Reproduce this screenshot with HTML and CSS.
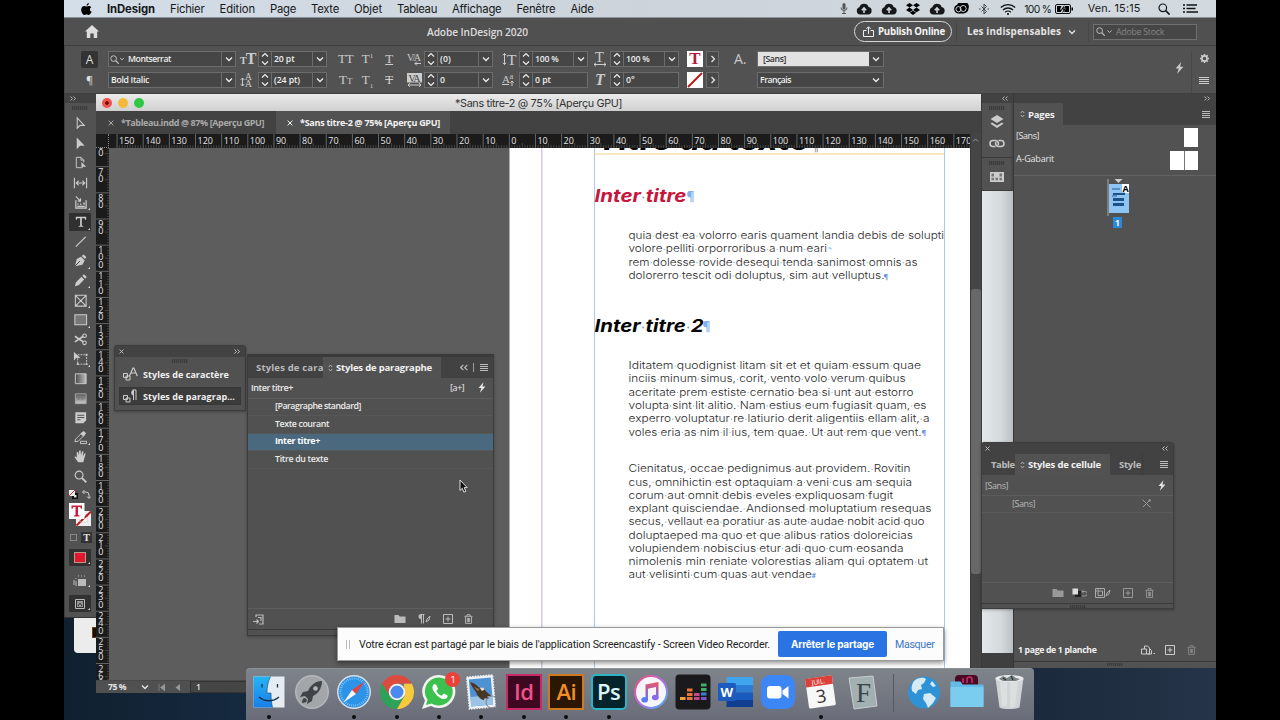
FILE: index.html
```html
<!DOCTYPE html>
<html lang="fr">
<head>
    <meta charset="UTF-8">
    <meta name="viewport" content="width=device-width, initial-scale=1.0">
    <title>Adobe InDesign 2020</title>
    <link rel="stylesheet" href="styles.css">
</head>
<body>
    <svg class="defs" width="0" height="0">
        <symbol id="down" viewBox="0 0 10 10"><path d="M2 3.5l3 3 3-3" fill="none" stroke="currentColor" stroke-width="1.3"/></symbol>
        <symbol id="right" viewBox="0 0 10 10"><path d="M3.5 2l3 3-3 3" fill="none" stroke="currentColor" stroke-width="1.3"/></symbol>
        <symbol id="spin" viewBox="0 0 12 16"><path d="M3 5.5l3-3 3 3M3 10.5l3 3 3-3" fill="none" stroke="currentColor" stroke-width="1.2"/></symbol>
        <symbol id="menu" viewBox="0 0 8 7" preserveAspectRatio="none"><path d="M0 .5h8M0 2.5h8M0 4.5h8M0 6.5h8" stroke="currentColor" stroke-width="1"/></symbol>
        <symbol id="dbl-right" viewBox="0 0 6 5"><path d="M.5.5l2 2-2 2M3.5.5l2 2-2 2" fill="none" stroke="currentColor" stroke-width=".9"/></symbol>
        <symbol id="dbl-left" viewBox="0 0 6 5"><path d="M2.5.5l-2 2 2 2M5.5.5l-2 2 2 2" fill="none" stroke="currentColor" stroke-width=".9"/></symbol>
        <symbol id="close" viewBox="0 0 6 6"><path d="M.6.6l4.8 4.8M5.4.6L.6 5.4" stroke="currentColor" stroke-width="1"/></symbol>
        <symbol id="updown" viewBox="0 0 5 8"><path d="M.8 3l1.7-2 1.7 2M.8 5l1.7 2 1.7-2" fill="none" stroke="currentColor" stroke-width=".9"/></symbol>
        <symbol id="bolt" viewBox="0 0 9 12"><path d="M6.2 0L.6 6.6h3.2L2 12l6.4-7.2H5z" fill="currentColor"/></symbol>
        <symbol id="search" viewBox="0 0 12 12"><circle cx="4.8" cy="4.8" r="3.8" fill="none" stroke="currentColor" stroke-width="1.2"/><path d="M7.6 7.6l4 4" stroke="currentColor" stroke-width="1.6"/></symbol>
        <symbol id="cloud" viewBox="0 0 16 12"><path d="M4 11.5a3.7 3.7 0 0 1-.6-7.2A4.8 4.8 0 0 1 12.6 4a3.8 3.8 0 0 1-.4 7.5z" fill="currentColor"/><path d="M8 10V5.4M5.8 7.2L8 5l2.2 2.2" fill="none" stroke="#ccd4da" stroke-width="1.6"/></symbol>
        <symbol id="folder" viewBox="0 0 12 10"><path d="M.5 1h4l1.2 1.5h5.8V9H.5z" fill="currentColor"/></symbol>
        <symbol id="plus" viewBox="0 0 10 10"><path d="M.5.5h9v9h-9zM5 2.6v4.8M2.6 5h4.8" fill="none" stroke="currentColor"/></symbol>
        <symbol id="trash" viewBox="0 0 10 11"><path d="M.5 2.5h9M3.3 2.2V.7h3.4v1.5M1.6 2.8v7.6h6.8V2.8M3.7 4.2v4.8M5 4.2v4.8M6.3 4.2v4.8" fill="none" stroke="currentColor" stroke-width="1"/></symbol>
    </svg>

    <div class="screen">
        <div class="back-window"><i></i></div>

        <div class="menubar">
            <svg class="apple" width="11" height="12" viewBox="0 0 11 12"><path d="M7.9 0C6.5.2 5.5 1.3 5.6 2.7 6.9 2.7 7.9 1.4 7.9 0zM5.600 3.500C5 3.500 4.300 3 3.300 3 1.600 3 .2 4.400.2 6.800.2 9.200 1.900 12 3.400 12c.8 0 1.200-.5 2.200-.5s1.300.5 2.100.5c1.300 0 2.500-2 2.900-3.200C8.400 7.700 8.400 5 10.300 4.200 9.700 3.400 8.800 3 8 3 6.900 3 6.300 3.500 5.600 3.500z"/></svg>
            <b data-w="48">InDesign</b>
            <span data-w="34.5">Fichier</span>
            <span data-w="35.5">Edition</span>
            <span data-w="26">Page</span>
            <span data-w="28">Texte</span>
            <span data-w="28">Objet</span>
            <span data-w="40">Tableau</span>
            <span data-w="49.5">Affichage</span>
            <span data-w="39">Fenêtre</span>
            <span data-w="23">Aide</span>
            <div class="tray">
                <svg width="8" height="11" viewBox="0 0 8 11"><rect x="2.5" width="3" height="6.5" rx="1.5" fill="#555"/><path d="M1 4.5a3 3 0 0 0 6 0M4 7.5v3M2 10.5h4" fill="none" stroke="#555"/></svg>
                <svg width="16" height="12"><use href="#cloud"/></svg>
                <svg width="16" height="12"><use href="#cloud"/></svg>
                <svg width="14" height="12" viewBox="0 0 14 12"><path d="M3.5 0L7 2.3 3.5 4.6 0 2.3zM10.5 0L14 2.3l-3.5 2.3L7 2.3zM3.5 4.6L7 6.9 3.5 9.2 0 6.9zM10.5 4.6L14 6.9l-3.5 2.3L7 6.9zM7 7.8l3.2 2L7 12 3.8 9.8z"/></svg>
                <svg width="16" height="12"><use href="#cloud"/></svg>
                <svg width="16" height="11" viewBox="0 0 16 11"><path d="M5 10.5a4.5 4.5 0 0 1-.8-8.7A6 5.500 0 0 1 15.5 5.5a5 5 0 0 1-5 5z"/><circle cx="5.5" cy="6.2" r="2.6" fill="none" stroke="#ccd4da"/><circle cx="10.2" cy="5.5" r="3" fill="none" stroke="#ccd4da"/></svg>
                <svg class="bt" width="10" height="12" viewBox="0 0 10 12"><path d="M2.5 3.5l5 5L5 11V1l2.5 2.5-5 5" fill="none" stroke="#444"/><path d="M0 6h1.5M8.5 6H10" stroke="#444"/></svg>
                <svg width="16" height="12" viewBox="0 0 16 12"><path d="M.8 4.5a10.500 10.500 0 0 1 14.400 0M3 7a7.200 7.200 0 0 1 10 0M5.200 9.200a4 4 0 0 1 5.600 0" fill="none" stroke="#111" stroke-width="1.3"/><circle cx="8" cy="11" r="1"/></svg>
                <span data-w="27">100 %</span>
                <svg class="battery" width="18" height="10" viewBox="0 0 18 10"><rect x=".5" y=".5" width="15" height="9" rx="1.5" fill="none" stroke="#111"/><path d="M2 2h4.5L5 5.5h2L6 8H2zM10 2h4v6H9l2-3.5H9zM16.500 3.500H18v3h-1.500z"/><path d="M9.5 1L6 5.5h2.5L7 9.5 11 4.700H8.500z"/></svg>
                <span class="clock" data-w="53">Ven. 15:15</span>
                <svg class="spot" width="12" height="12"><use href="#search"/></svg>
                <svg width="15" height="9" viewBox="0 0 15 9"><path d="M0 1h2M3.5 1H14M0 4.5h2M3.5 4.5H12.5M0 8h2M3.5 8H15" stroke="#111" stroke-width="1.6"/></svg>
            </div>
        </div>

        <div class="appbar">
            <svg class="home" width="14" height="13" viewBox="0 0 14 13"><path d="M7 0l7 6.5h-1.8V13H8.7V8.5H5.3V13H1.8V6.5H0z" fill="#ddd"/></svg>
            <span class="app-title" data-w="101">Adobe InDesign 2020</span>
            <div class="publish">
                <svg width="11" height="11" viewBox="0 0 11 11"><path d="M3.5 4.5h-3v6h10v-6h-3M5.5 8V.8M3.3 3l2.2-2.2L7.7 3" fill="none" stroke="#eee"/></svg>
                <b data-w="67">Publish Online</b>
            </div>
            <div class="workspace-name"><b data-w="94">Les indispensables</b><svg width="10" height="10"><use href="#down"/></svg></div>
            <div class="stock"><svg width="9" height="9"><use href="#search"/></svg><svg width="7" height="7"><use href="#down"/></svg><span data-w="48">Adobe Stock</span></div>
        </div>

        <div class="control">
            <div class="modes"><div class="mode on">A</div><div class="mode pil">¶</div></div>
            <div class="pair fonts">
                <div class="field"><svg class="lens" width="9" height="9"><use href="#search"/></svg><svg class="tiny" width="6" height="6"><use href="#down"/></svg><span class="val" data-w="43">Montserrat</span><i class="drop"><svg width="10" height="10"><use href="#down"/></svg></i></div>
                <div class="field"><span class="val" data-w="38">Bold Italic</span><i class="drop"><svg width="10" height="10"><use href="#down"/></svg></i></div>
            </div>
            <div class="pair glyphs g1">
                <div><small>T</small><big>T</big></div>
                <div><svg width="14" height="14" viewBox="0 0 14 14"><path d="M2.5 5v8M.8 6.8L2.5 5l1.7 1.8M.8 11.2L2.500 13l1.700-1.800" fill="none" stroke="#ccc"/><text x="5" y="7" font-size="9.5">A</text><text x="5" y="14" font-size="9.5">A</text></svg></div>
            </div>
            <div class="pair num">
                <div class="field"><i class="step"><svg width="12" height="16"><use href="#spin"/></svg></i><span class="val" data-w="20.5">20 pt</span><i class="drop"><svg width="10" height="10"><use href="#down"/></svg></i></div>
                <div class="field"><i class="step"><svg width="12" height="16"><use href="#spin"/></svg></i><span class="val" data-w="26">(24 pt)</span><i class="drop"><svg width="10" height="10"><use href="#down"/></svg></i></div>
            </div>
            <div class="pair glyphs g2">
                <div><span>TT</span><span>T<sup>1</sup></span><span><u>T</u></span></div>
                <div><span>T<small>T</small></span><span>T<sub>1</sub></span><span><s>T</s></span></div>
            </div>
            <div class="pair glyphs g3">
                <div><svg width="15" height="14" viewBox="0 0 15 14"><text x="0" y="9" font-size="10" textLength="14">V/A</text><path d="M14 11.5H8M10 9.5l-2 2 2 2" fill="none" stroke="#ccc"/></svg></div>
                <div><svg width="15" height="14" viewBox="0 0 15 14"><rect width="15" height="9.5" fill="#ccc"/><text x="1.5" y="8.5" font-size="10" textLength="12" class="inv">VA</text><path d="M1 12h13M3 10.2L1 12l2 1.8M12 10.2l2 1.8-2 1.8" fill="none" stroke="#ccc"/></svg></div>
            </div>
            <div class="pair num">
                <div class="field"><i class="step"><svg width="12" height="16"><use href="#spin"/></svg></i><span class="val" data-w="11">(0)</span><i class="drop"><svg width="10" height="10"><use href="#down"/></svg></i></div>
                <div class="field"><i class="step"><svg width="12" height="16"><use href="#spin"/></svg></i><span class="val">0</span><i class="drop"><svg width="10" height="10"><use href="#down"/></svg></i></div>
            </div>
            <div class="pair glyphs g4">
                <div><svg width="15" height="14" viewBox="0 0 15 14"><path d="M2.5 1.5v11M.8 3.3l1.7-1.8 1.7 1.8M.8 10.7l1.7 1.8 1.7-1.8" fill="none" stroke="#ccc"/><text x="5" y="12.5" font-size="15.5">T</text></svg></div>
                <div><svg width="14" height="14" viewBox="0 0 14 14"><text x="0" y="9.5" font-size="11">A</text><text x="7.5" y="6" font-size="8.5">a</text><path d="M0 11.5h7M10 13V8M8.3 9.7L10 8l1.7 1.7" fill="none" stroke="#ccc"/></svg></div>
            </div>
            <div class="pair num">
                <div class="field"><i class="step"><svg width="12" height="16"><use href="#spin"/></svg></i><span class="val" data-w="23.5">100 %</span><i class="drop"><svg width="10" height="10"><use href="#down"/></svg></i></div>
                <div class="field"><i class="step"><svg width="12" height="16"><use href="#spin"/></svg></i><span class="val" data-w="16">0 pt</span></div>
            </div>
            <div class="pair glyphs g5">
                <div><svg width="14" height="15" viewBox="0 0 14 15"><text x="2" y="10" font-size="14.5">T</text><path d="M1 12.5h12M3 10.7l-2 1.8 2 1.8M11 10.7l2 1.8-2 1.8" fill="none" stroke="#ccc"/></svg></div>
                <div><em>T</em></div>
            </div>
            <div class="pair num">
                <div class="field"><i class="step"><svg width="12" height="16"><use href="#spin"/></svg></i><span class="val" data-w="23.5">100 %</span><i class="drop"><svg width="10" height="10"><use href="#down"/></svg></i></div>
                <div class="field"><i class="step"><svg width="12" height="16"><use href="#spin"/></svg></i><span class="val">0°</span></div>
            </div>
            <div class="pair swatches">
                <div><span class="sw">T</span><i class="more"><svg width="10" height="10"><use href="#right"/></svg></i></div>
                <div><span class="sw"><svg width="16" height="16"><path d="M1 15L15 1" stroke="#c01818" stroke-width="2"/></svg></span><i class="more"><svg width="10" height="10"><use href="#right"/></svg></i></div>
            </div>
            <div class="char-style">A.</div>
            <div class="pair lang">
                <div class="field light"><span class="val" data-w="23">[Sans]</span><i class="drop"><svg width="10" height="10"><use href="#down"/></svg></i></div>
                <div class="field"><span class="val" data-w="31">Français</span><i class="drop"><svg width="10" height="10"><use href="#down"/></svg></i></div>
            </div>
            <div class="control-end">
                <svg class="bolt" width="9" height="12"><use href="#bolt"/></svg>
                <div class="opts">
                    <svg width="9" height="9" viewBox="0 0 9 9"><circle cx="4.5" cy="4.5" r="2.6" fill="none" stroke="#ccc" stroke-width="1.6"/><path d="M4.5 0v1.5M4.5 7.5V9M0 4.5h1.5M7.5 4.5H9M1.3 1.3l1 1M6.7 6.7l1 1M7.7 1.3l-1 1M2.3 6.7l-1 1" stroke="#ccc" stroke-width="1.5"/></svg>
                    <svg width="10" height="7"><use href="#menu"/></svg>
                </div>
            </div>
        </div>

        <div class="workspace">
            <div class="toolbar">
                <div class="panel-head"><svg width="6" height="5"><use href="#dbl-right"/></svg></div>
                <div class="grip"></div>
                <div class="tools">
                    <div class="tool"><svg viewBox="0 0 16 16"><path d="M4.5 2v11l3-3h4.5z" fill="none" stroke="#ccc" stroke-width="1.1"/></svg></div>
                    <div class="tool"><svg viewBox="0 0 16 16"><path d="M4 1.5v12.5l3.5-3.5h5z"/></svg></div>
                    <div class="tool"><svg viewBox="0 0 16 16"><path d="M9 13.5H3.5v-11h5l3 3V8M8.5 2.5v3h3" fill="none" stroke="#ccc"/><path d="M9 7.5v7l2-2h3z"/></svg></div>
                    <div class="tool"><svg viewBox="0 0 16 16"><path d="M1.500 3v11M14.500 3v11M3.500 8.500h9M6 6L3.500 8.500 6 11M10 6l2.500 2.500L10 11" fill="none" stroke="#ccc" stroke-width="1.2"/></svg></div>
                    <div class="tool more"><svg viewBox="0 0 16 16"><path d="M3 5.500v8.500h11V5.500" fill="none" stroke="#ccc" stroke-width="1.3"/><path d="M4.500 9h1.500v1.500H4.500zM7.500 9H9v1.500H7.500zM11 8h1.500v2.500H11zM4.500 11.500h8V13h-8z"/><path d="M3 1.500l5 5M8 3.500v3H5" fill="none" stroke="#ccc" stroke-width="1.2"/></svg></div>
                    <div class="tool more on"><svg viewBox="0 0 16 16"><path d="M3 3h11v3h-1L12.400 4.400H9.400v8l1.600.5v.8H6v-.8l1.600-.5v-8h-3L4 6H3z"/></svg></div>
                    <div class="tool"><svg viewBox="0 0 16 16"><path d="M3 13.500L13.500 3" stroke="#ccc" stroke-width="1.3"/></svg></div>
                    <div class="tool more"><svg viewBox="0 0 16 16"><path d="M2 14l2-7.500 4.500-2.500 4 4L10 12.500zM9.300 3.200l2-1.700 3 3-1.500 2z"/><path d="M2 14l5.500-5.500" stroke="#444"/></svg></div>
                    <div class="tool more"><svg viewBox="0 0 16 16"><path d="M2 14l1-4 6-6 3 3-6 6zM10 3l1.700-1.700 3 3L13 6z"/></svg></div>
                    <div class="tool more"><svg viewBox="0 0 16 16"><path d="M2.500 2.500h11.500v11.500H2.500zM2.500 2.500L14 14M14 2.500L2.500 14" fill="none" stroke="#ccc" stroke-width="1.1"/></svg></div>
                    <div class="tool more"><svg viewBox="0 0 16 16"><path d="M2 3h12.500v10.500H2z" fill="#777" stroke="#ccc" stroke-width="1.1"/></svg></div>
                    <div class="tool"><svg viewBox="0 0 16 16"><path d="M2 4.500l9 6M2 10.500l9-6" stroke="#ccc" stroke-width="1.7"/><circle cx="12.3" cy="4" r="1.9" fill="none" stroke="#ccc" stroke-width="1.2"/><circle cx="12.3" cy="11.5" r="1.9" fill="none" stroke="#ccc" stroke-width="1.2"/></svg></div>
                    <div class="tool more"><svg viewBox="0 0 16 16"><path d="M5 4h9.500v10H5z" fill="none" stroke="#ccc" stroke-dasharray="2 1"/><path d="M1 1v9l2.500-2.500H8z"/><path d="M13.500 3h2v2h-2zM13.500 13h2v2h-2zM4 13h2v2H4z"/></svg></div>
                    <div class="tool"><svg viewBox="0 0 16 16"><defs><linearGradient id="ga"><stop offset="0" stop-color="#4a4a4a"/><stop offset="1" stop-color="#c0c0c0"/></linearGradient></defs><path d="M2.500 3H14v10.500H2.500z" fill="url(#ga)" stroke="#ccc"/></svg></div>
                    <div class="tool"><svg viewBox="0 0 16 16"><defs><linearGradient id="gb" x2="0" y2="1"><stop offset="0" stop-color="#555"/><stop offset="1" stop-color="#ccc"/></linearGradient></defs><path d="M2.500 3H14v10.500H2.500z" fill="url(#gb)" stroke="#aaa"/><path d="M3 5h2v2H3zM7 5h2v2H7zM11 5h2v2h-2zM5 7h2v2H5zM9 7h2v2H9z" fill="#777"/></svg></div>
                    <div class="tool"><svg viewBox="0 0 16 16"><path d="M2.500 2.500H14v8.500L11 14H2.500z"/><path d="M4.500 5.500H12M4.500 8H12M4.500 10.500H8" stroke="#505050" stroke-width="1.1"/></svg></div>
                    <div class="tool more"><svg viewBox="0 0 16 16"><path d="M2 12.500l1-3 5.500-5.500 2.500 2.500L5.500 12z" fill="none" stroke="#ccc"/><path d="M8 3.500L11.500 1l2.500 2.500-2.500 3.500z"/><path d="M8 12h6.500v2.500H8z" fill="none" stroke="#ccc"/></svg></div>
                    <div class="tool"><svg viewBox="0 0 16 16"><path d="M5.500 14L1.500 8.500c.5-1 1.500-.8 2.500.7L4 3.500c.8-.8 1.500-.3 1.700.5l.7 3 .1-5c.5-.8 1.500-.8 1.700 0l.3 5 1.200-4.500c.8-.5 1.500 0 1.400.7l-.6 4.500 1.800-3c.8-.3 1.300.3 1 1L11.500 12 11 14z"/></svg></div>
                    <div class="tool"><svg viewBox="0 0 16 16"><circle cx="6.500" cy="6.500" r="4.2" fill="none" stroke="#ccc" stroke-width="1.2"/><path d="M9.700 9.700l4.500 4.500" stroke="#ccc" stroke-width="2"/></svg></div>
                </div>
                <div class="swap-row">
                    <svg width="9" height="9" viewBox="0 0 9 9"><path d="M3 3h6v6H3z" fill="#111"/><path d="M0 0h6v6H0z" fill="#eee"/><path d="M0 6l6-6" stroke="#c33"/><path d="M5 5h2.500v2.500H5z" fill="#ddd"/></svg>
                    <svg width="9" height="9" viewBox="0 0 9 9"><path d="M2.500 0L.5 2l2 2M.8 2H4a3 3 0 0 1 3 3v3M5 6.500l2 2 2-2" fill="none" stroke="#ccc"/></svg>
                </div>
                <div class="fill-stroke">
                    <svg width="22" height="24" viewBox="0 0 22 24"><path d="M7 8h15v15H7z" fill="#eee"/><path d="M7.500 22.500L22 8.500" stroke="#b51f1f" stroke-width="2"/><path d="M11 12h7v7h-7z" fill="#fff" stroke="#bbb" stroke-width=".5"/><path d="M11.500 18.500l7-6.500" stroke="#b51f1f" stroke-width="2"/><path d="M0 0h15.500v16H0z" fill="#fff"/><path d="M2.500 2.500h10.500v3.200h-1L11.200 4H9v8l1.500.4v1H5v-1l1.500-.4V4H4.300l-.8 1.700h-1z" fill="#c8203c"/></svg>
                </div>
                <div class="format-row"><i></i><b>T</b></div>
                <div class="chip red"><i></i></div>
                <div class="chip plain"><svg width="14" height="12" viewBox="0 0 14 12"><path d="M5 4h8v7H5z" fill="#bbb"/><path d="M1 5v5M3 3v1M5 1h1M8 1h1M11 1h1M3 6v5" stroke="#bbb"/></svg></div>
                <div class="chip dark"><svg width="10" height="10" viewBox="0 0 10 10"><path d="M.5.5h9v9h-9z" fill="none" stroke="#bbb"/><path d="M2 2h6v6H2z" fill="#999"/><path d="M3 7l2-3 2 3" stroke="#333" fill="none"/></svg></div>
            </div>

            <div class="doc-window">
                <div class="titlebar"><i class="l r"></i><i class="l y"></i><i class="l g"></i><span data-w="167">*Sans titre-2 @ 75% [Aperçu GPU]</span></div>
                <div class="tabs">
                    <div class="tab"><svg width="6" height="6"><use href="#close"/></svg><b data-w="143">*Tableau.indd @ 87% [Aperçu GPU]</b></div>
                    <div class="tab on"><svg width="6" height="6"><use href="#close"/></svg><b data-w="140">*Sans titre-2 @ 75% [Aperçu GPU]</b></div>
                </div>
                <div class="doc-body">
                    <div class="doc-main">
                        <div class="ruler-row"><div class="corner"></div><svg id="hruler" class="hruler" viewBox="109 134 861 14" width="861" height="14"></svg></div>
                        <div class="canvas-row">
                            <svg id="vruler" class="vruler" viewBox="96 148 13 532" width="13" height="532"></svg>
                            <svg id="page" class="page" viewBox="109 148 861 532" width="861" height="532">
                                <rect x="509.5" y="140" width="461" height="550" fill="#fff"/>
                                <path d="M541.8 148v540" stroke="#d9c3e0" stroke-width="1.4"/>
                                <path d="M594.5 148v540M944.5 148v540" stroke="#a9cbe6"/>
                                <path d="M594.5 154H944" stroke="#f0d28c" stroke-width="1.2"/>
                                <text class="h title" x="597" y="149.7" textLength="212" lengthAdjust="spacingAndGlyphs">Titre du texte</text>
                                <text class="p title-end" x="811" y="150.5">¶</text>
                                <text class="h red" x="594.5" y="202" textLength="92" lengthAdjust="spacingAndGlyphs">Inter titre</text>
                                <text class="p big" x="686.5" y="201">¶</text>
                                <text class="h" x="594.5" y="332" textLength="109" lengthAdjust="spacingAndGlyphs">Inter titre 2</text>
                                <text class="p big" x="702.5" y="331">¶</text>
                                <g class="body">
                                    <text x="628.5" y="239" textLength="315.5" lengthAdjust="spacingAndGlyphs">quia dest ea volorro earis quament landia debis de solupti</text>
                                    <text x="628.5" y="252.3" textLength="198.5" lengthAdjust="spacingAndGlyphs">volore pelliti orporroribus a num eari</text>
                                    <text x="628.5" y="265.7" textLength="289" lengthAdjust="spacingAndGlyphs">rem dolesse rovide desequi tenda sanimost omnis as</text>
                                    <text x="628.5" y="279" textLength="256" lengthAdjust="spacingAndGlyphs">dolorerro tescit odi doluptus, sim aut velluptus.</text>
                                    <text x="628.5" y="369" textLength="292.5" lengthAdjust="spacingAndGlyphs">Iditatem quodignist litam sit et et quiam essum quae</text>
                                    <text x="628.5" y="382.3" textLength="277" lengthAdjust="spacingAndGlyphs">inciis minum simus, corit, vento volo verum quibus</text>
                                    <text x="628.5" y="395.5" textLength="285" lengthAdjust="spacingAndGlyphs">aceritate prem estiste cernatio bea si unt aut estorro</text>
                                    <text x="628.5" y="408.9" textLength="298" lengthAdjust="spacingAndGlyphs">volupta sint lit alitio. Nam estius eum fugiasit quam, es</text>
                                    <text x="628.5" y="422.2" textLength="301" lengthAdjust="spacingAndGlyphs">experro voluptatur re latiurio derit aligentiis ellam alit, a</text>
                                    <text x="628.5" y="435.5" textLength="293" lengthAdjust="spacingAndGlyphs">voles eria as nim il ius, tem quae. Ut aut rem que vent.</text>
                                    <text x="628.5" y="472.2" textLength="282" lengthAdjust="spacingAndGlyphs">Cienitatus, occae pedignimus aut providem. Rovitin</text>
                                    <text x="628.5" y="485.5" textLength="283.5" lengthAdjust="spacingAndGlyphs">cus, omnihictin est optaquiam a veni cus am sequia</text>
                                    <text x="628.5" y="498.7" textLength="264.5" lengthAdjust="spacingAndGlyphs">corum aut omnit debis eveles expliquosam fugit</text>
                                    <text x="628.5" y="512" textLength="303" lengthAdjust="spacingAndGlyphs">explant quisciendae. Andionsed moluptatium resequas</text>
                                    <text x="628.5" y="525.2" textLength="296" lengthAdjust="spacingAndGlyphs">secus, vellaut ea poratiur as aute audae nobit acid quo</text>
                                    <text x="628.5" y="538.5" textLength="284.5" lengthAdjust="spacingAndGlyphs">doluptaeped ma quo et que alibus ratios doloreicias</text>
                                    <text x="628.5" y="551.7" textLength="275" lengthAdjust="spacingAndGlyphs">volupiendem nobiscius etur adi quo cum eosanda</text>
                                    <text x="628.5" y="565" textLength="299.5" lengthAdjust="spacingAndGlyphs">nimolenis min reniate volorestias aliam qui optatem ut</text>
                                    <text x="628.5" y="578.2" textLength="183.5" lengthAdjust="spacingAndGlyphs">aut velisinti cum quas aut vendae</text>
                                </g>
                                <path d="M828 248h3v1.500" fill="none" stroke="#8fb8e0"/>
                                <text class="p" x="883.5" y="278.5">¶</text>
                                <text class="p" x="921.5" y="435">¶</text>
                                <text class="p" x="811.5" y="577.5">#</text>
                            </svg>
                        </div>
                    </div>
                    <div class="scroll"><svg width="7" height="4" viewBox="0 0 7 4"><path d="M1 3.500l2.500-2.500L6 3.500" fill="none" stroke="#999"/></svg><i></i></div>
                </div>
                <div class="status">
                    <b data-w="18">75 %</b>
                    <svg width="10" height="10"><use href="#down"/></svg>
                    <svg width="7" height="7" viewBox="0 0 7 7"><path d="M1 0v7M7 0v7L2.500 3.500z" fill="#999" stroke="#999" stroke-width=".6"/></svg>
                    <svg width="5" height="7" viewBox="0 0 5 7"><path d="M5 0v7L.5 3.500z" fill="#999"/></svg>
                    <span class="page-no">1</span>
                </div>
            </div>

            <div class="icon-dock">
                <div class="panel-head"><svg width="6" height="5"><use href="#dbl-left"/></svg></div>
                <div class="icon-group">
                    <div class="grip"></div>
                    <svg width="14" height="14" viewBox="0 0 14 14"><path d="M7 0l6.500 4L7 8 .5 4z" fill="#ccc"/><path d="M2 7.500L.5 8.800 7 13l6.500-4.200L12 7.500 7 10.600z" fill="#ccc"/></svg>
                    <svg class="link" width="16" height="9" viewBox="0 0 16 9"><path d="M6.500 7.500H4a3 3 0 0 1 0-6h2.500a3 3 0 0 1 2.500 4.500M9.500 1.500H12a3 3 0 0 1 0 6H9.500A3 3 0 0 1 7 3" fill="none" stroke="#ccc" stroke-width="1.6"/></svg>
                </div>
                <div class="icon-group last">
                    <div class="grip"></div>
                    <svg width="14" height="10" viewBox="0 0 14 10"><path d="M0 0h14v10H0z" fill="#ccc"/><path d="M1.500 1.500h2.500v3H1.500zM9.500 1.500H12v3H9.500zM1.500 5.800h2.500v2.500H1.500zM5.500 5.800H8v2.500H5.500zM9.500 5.800H12v2.500H9.500z" fill="#777"/></svg>
                </div>
                <div class="peek"></div>
            </div>

            <div class="pages">
                <div class="panel-head"><svg width="6" height="5"><use href="#dbl-right"/></svg></div>
                <div class="ptabs"><div class="ptab on"><svg width="5" height="8"><use href="#updown"/></svg><b data-w="26.5">Pages</b></div><svg class="burger" width="8" height="7"><use href="#menu"/></svg></div>
                <div class="masters">
                    <div><span data-w="23">[Sans]</span><i class="sheet"></i></div>
                    <div><span data-w="38">A-Gabarit</span><i class="sheet two"></i></div>
                </div>
                <div class="thumbs">
                    <svg width="26" height="52" viewBox="0 0 26 52"><path d="M4 2v37" stroke="#aaa"/><path d="M10.500 2h8l-4 4z" fill="#ccc"/><rect x="5" y="7" width="20" height="29" fill="#8ec5f2"/><rect x="18" y="7" width="7" height="9" fill="#fff"/><text x="18.500" y="15">A</text><path d="M8 12h8M8 19h5" stroke="#275a8c" stroke-width="1"/><path d="M9 16.500h12M9 22.500h11M9 27.500h11" stroke="#1c5288" stroke-width="3"/><path d="M9 15.500h12" stroke="#8ec5f2"/><rect x="9" y="40" width="9" height="11" fill="#2c87d6"/><text class="n" x="11" y="49">1</text></svg>
                </div>
                <div class="pages-foot">
                    <b data-w="78.5">1 page de 1 planche</b>
                    <svg class="f1" width="14" height="10" viewBox="0 0 14 10"><path d="M.5 4h5v5h-5zM3.500 4V1h3l2 2v6H5.500M9 4l1.500 1.500v3.500H7" fill="none" stroke="#ccc"/><path d="M12.500 8.500h1.500" stroke="#ccc"/></svg>
                    <svg width="10" height="10" class="f2"><use href="#plus"/></svg>
                    <svg width="9" height="10" class="dim"><use href="#trash"/></svg>
                </div>
                <div class="bottom-grip"><i class="grip"></i></div>
            </div>
        </div>

        <div class="float mini">
            <div class="float-head"><svg width="5" height="5"><use href="#close"/></svg><svg width="6" height="5"><use href="#dbl-right"/></svg></div>
            <div class="grip"></div>
            <div class="mini-row"><svg width="15" height="14" viewBox="0 0 15 14"><path d="M.5 6.500h4v4h-4zM3 9h4v4H3z" fill="none" stroke="#ccc"/><path d="M6.500 9L10 1h.8L14.300 9M8 6h5" fill="none" stroke="#ccc" stroke-width="1.2"/></svg><b data-w="86">Styles de caractère</b></div>
            <div class="mini-row on"><svg width="15" height="14" viewBox="0 0 15 14"><path d="M.5 6.500h4v4h-4zM3 9h4v4H3z" fill="none" stroke="#ccc"/><path d="M9.500 1H13v10M10.500 1v10" fill="none" stroke="#ccc"/><path d="M10 1a3 3 0 0 0 0 5.500z" fill="#ccc"/></svg><b data-w="92">Styles de paragrap...</b></div>
        </div>

        <div class="float para">
            <div class="ptabs">
                <div class="ptab cut"><b data-w="77">Styles de caract</b></div>
                <div class="ptab on"><svg width="5" height="8"><use href="#updown"/></svg><b data-w="96">Styles de paragraphe</b></div>
                <svg class="burger lefts" width="8" height="7"><use href="#dbl-left"/></svg><i class="bar"></i><svg class="burger" width="8" height="7"><use href="#menu"/></svg>
            </div>
            <div class="cur-style"><span data-w="42">Inter titre+</span><em data-w="14">[a+]</em><svg width="8" height="11"><use href="#bolt"/></svg></div>
            <div class="styles">
                <div><span data-w="86">[Paragraphe standard]</span></div>
                <div><span data-w="54">Texte courant</span></div>
                <div class="sel"><span data-w="45">Inter titre+</span></div>
                <div><span data-w="53">Titre du texte</span></div>
            </div>
            <div class="para-foot">
                <svg class="first" width="11" height="11" viewBox="0 0 11 11"><path d="M3 3V1h7v9H6M0 7.500h5M3.500 5.500l2 2-2 2M5 3.500h3V7" fill="none" stroke="#bbb" stroke-width="1.2"/></svg>
                <svg width="12" height="10"><use href="#folder"/></svg>
                <svg width="14" height="10" viewBox="0 0 14 10"><path d="M4 0a2.500 2.500 0 0 0 0 5z" fill="#bbb"/><path d="M4.500.5v9M6.500 0v9.500M4 .5h3.500M9 8l1-3 3-3-1 4z" fill="none" stroke="#bbb"/></svg>
                <svg width="10" height="10"><use href="#plus"/></svg>
                <svg width="9" height="10"><use href="#trash"/></svg>
            </div>
            <div class="bottom-grip"></div>
        </div>

        <div class="float cell">
            <div class="float-head"><svg width="5" height="5"><use href="#close"/></svg><svg width="6" height="5"><use href="#dbl-left"/></svg></div>
            <div class="ptabs">
                <div class="ptab cut"><b data-w="29">Tablea</b></div>
                <div class="ptab on"><svg width="5" height="8"><use href="#updown"/></svg><b data-w="73">Styles de cellule</b></div>
                <div class="ptab third"><b data-w="22">Style</b></div>
                <svg class="burger" width="8" height="7"><use href="#menu"/></svg>
            </div>
            <div class="cur-style"><span data-w="23">[Sans]</span><svg width="8" height="11"><use href="#bolt"/></svg></div>
            <div class="cell-row"><span data-w="23">[Sans]</span><svg width="9" height="9" viewBox="0 0 9 9"><path d="M.5.5l8 8M1 8l6-6" stroke="#999" fill="none"/><path d="M6 1l2-1 1 1-1 2z" fill="#999"/></svg></div>
            <div class="cell-foot">
                <svg width="12" height="10"><use href="#folder"/></svg>
                <svg width="15" height="10" viewBox="0 0 15 10"><path d="M3 3h6v6H3z" fill="#222"/><path d="M.5.500h5.500v6H.5z" fill="#ddd"/><path d="M10 3.500h3a2 2 0 0 1 0 4.500h-3M11.500 2l-1.700 1.500 1.700 1.500" fill="none" stroke="#999"/></svg>
                <svg width="16" height="10" viewBox="0 0 16 10"><path d="M.5.500h9v9h-9zM3 3h4.500v4.500H3zM.5 3h2M3 .5v2M11 8l1-3 3-3-1 4z" fill="none" stroke="#aaa"/></svg>
                <svg class="wide" width="10" height="10"><use href="#plus"/></svg>
                <svg class="wide" width="9" height="10"><use href="#trash"/></svg>
            </div>
            <div class="bottom-grip"><i class="grip"></i></div>
        </div>

        <div class="share">
            <i class="handle"></i>
            <span data-w="411">Votre écran est partagé par le biais de l'application Screencastify - Screen Video Recorder.</span>
            <button><b data-w="83">Arrêter le partage</b></button>
            <a data-w="39.5">Masquer</a>
        </div>

        <div class="dock">
            <div class="app run"><svg viewBox="0 0 36 36"><defs><linearGradient id="fi" x2="0" y2="1"><stop offset="0" stop-color="#25b4f5"/><stop offset="1" stop-color="#1a7fe8"/></linearGradient></defs><path d="M2.500 2.500h31v31h-31z" fill="#e6edf2"/><path d="M2.500 2.500h17C17 8 16 13 16 19h4c0 5 .5 10 1.500 14.500h-19z" fill="url(#fi)"/><path d="M19.500 2.500C17 8 16 13 16 19h4c0 5 .5 10 1.500 14.500" fill="none" stroke="#1c4568" stroke-width=".6"/><path d="M11 10v3.500M26.500 10v3.500M8 23c6 5 14 5 20 0" fill="none" stroke="#14304a" stroke-width="1.3"/></svg></div>
            <div class="app"><svg viewBox="0 0 36 36"><circle cx="18" cy="18" r="17" fill="#b4b8bb"/><circle cx="18" cy="18" r="15.5" fill="#a2a6a9"/><path d="M28 7c-7 0-12 5-14 10l-5 1-3 5 5-1 3 3-1 5 5-3 1-5c5-2 9-8 9-15z" fill="#404448"/><circle cx="21.5" cy="14.5" r="2.3" fill="#b4b8bb"/><path d="M8 29c0-3 1-5 3-5l2 2c0 2-2 3-5 3z" fill="#404448"/></svg></div>
            <div class="app run"><svg viewBox="0 0 36 36"><circle cx="18" cy="18" r="17" fill="#d9dee2"/><circle cx="18" cy="18" r="15.5" fill="#2b93e8"/><circle cx="18" cy="18" r="13.5" fill="none" stroke="#b8dcf8" stroke-width="2" stroke-dasharray=".6 1.5"/><path d="M28.500 7.500L16 16l4 4z" fill="#e8403c"/><path d="M7.500 28.500L16 16l4 4z" fill="#f4f4f4"/></svg></div>
            <div class="app run"><svg viewBox="0 0 36 36"><path d="M18 18L3.300 9.500A17 17 0 0 0 18 35l7.400-12.700z" fill="#2fa25a"/><path d="M32.700 9.500A17 17 0 0 1 18 35l7.400-12.800L25 9.500z" fill="#f7c93c"/><path d="M18 9.500h14.700A17 17 0 0 0 3.300 9.500L10 21z" fill="#dd4b3e"/><circle cx="18" cy="18" r="8.3" fill="#f4f4f4"/><circle cx="18" cy="18" r="6.5" fill="#4a8af0"/></svg></div>
            <div class="app run"><svg viewBox="0 0 36 36"><path d="M18 1a16.500 16.500 0 1 1-8 31L1 35l3-8.500A16.500 16.500 0 0 1 18 1z" fill="#f0f3f0"/><path d="M18 3.500a14 14 0 1 1-7.500 26L5 31l1.600-5.300A14 14 0 0 1 18 3.500z" fill="#3cc04e"/><path d="M13.500 10c-2.500 1.500-3 4 0 8.500 3.500 5 7.500 7 10.500 6.500 2-.5 3-2.500 2.500-3.500l-3.500-2-2.500 2.200c-2.500-1-4.300-3-5.200-4.800l1.700-2-1.500-4z" fill="#fff"/></svg><em>1</em></div>
            <div class="app run"><svg viewBox="0 0 36 36"><g transform="rotate(-5 18 18)"><path d="M5 2h26v32H5z" fill="#eef1f3" stroke="#eef1f3" stroke-width="1.5" stroke-dasharray="1.5 1.2"/><path d="M7 4.500h22v27H7z" fill="#4f92d4"/><path d="M7 22h22v9.500H7z" fill="#9ac3e6"/><path d="M8 7c3 1 6 3 8 6l4 1c2 3 5 6 8 9l-4-.5 1 3-4-1-1 2c-4-2-6-5-7-9-2-3-4-6-5-10.500z" fill="#4a3626"/><path d="M11 12l4 5 2-2z" fill="#8a6a44"/><path d="M17 13.500l4 .5.500 2-2.500 1z" fill="#e8e0d4"/></g><circle cx="29" cy="28" r="6" fill="none" stroke="#6d7885" stroke-width="1.2" opacity=".7"/></svg></div>
            <div class="app run"><div class="cc id">Id</div></div>
            <div class="app run"><div class="cc ai">Ai</div></div>
            <div class="app run"><div class="cc ps">Ps</div></div>
            <div class="app"><svg viewBox="0 0 36 36"><defs><linearGradient id="it" x2="1" y2="1"><stop offset="0" stop-color="#f64f6e"/><stop offset=".5" stop-color="#b56ae8"/><stop offset="1" stop-color="#3bb8f0"/></linearGradient><linearGradient id="nt" x2="0" y2="1"><stop offset="0" stop-color="#f0506a"/><stop offset="1" stop-color="#5b7df0"/></linearGradient></defs><circle cx="18" cy="18" r="16" fill="#f6f6f8" stroke="url(#it)" stroke-width="2"/><path d="M12.500 10.500l13-2.500v15.500h-2.500V13l-8 1.700V26h-2.500z" fill="url(#nt)"/><ellipse cx="11.700" cy="25.700" rx="3.400" ry="2.800" fill="#5b7df0"/><ellipse cx="22.300" cy="23.500" rx="3.400" ry="2.800" fill="#8a6ae8"/></svg></div>
            <div class="app"><svg viewBox="0 0 36 36"><rect x=".5" y=".5" width="35" height="35" rx="4" fill="#1a1a1c"/><path d="M5 24.500h5.500" stroke="#f0a13a" stroke-width="3"/><path d="M12 24.500h5.500M12 20.500h5.500M12 16h5.500" stroke="#e8763a" stroke-width="3"/><path d="M19 24.500h5.500M19 20.500h5.500" stroke="#c24a8a" stroke-width="3"/><path d="M26 24.500h5.500" stroke="#7a54c8" stroke-width="3"/><path d="M26 20h5.500" stroke="#3a7fd0" stroke-width="3"/><path d="M26 15.500h5.500M26 11h5.500" stroke="#3fae6c" stroke-width="3"/></svg></div>
            <div class="app"><svg viewBox="0 0 36 36"><path d="M8.500 3H35v8H8.500z" fill="#41a5ee"/><path d="M8.500 11H35v7.500H8.500z" fill="#2b7cd3"/><path d="M8.500 18.500H35V26H8.500z" fill="#185abd"/><path d="M8.500 26H35v7H8.500z" fill="#103f91"/><rect x="0" y="9" width="18" height="18" rx="1.5" fill="#1b5cbe"/><text x="2.500" y="22.500" font-size="13" fill="#fff" font-weight="700">W</text></svg></div>
            <div class="app"><svg viewBox="0 0 36 36"><rect x="1" y="1" width="34" height="34" rx="9" fill="#3d86f6"/><rect x="7" y="12" width="14.5" height="12.5" rx="3" fill="#fff"/><path d="M22.500 16.500l6-4.500v12.500l-6-4.500z" fill="#fff"/></svg></div>
            <div class="app run"><svg viewBox="0 0 36 36"><g transform="rotate(-8 18 18)"><rect x="4" y="3" width="27" height="30" rx="1.5" fill="#f7f7f7"/><path d="M4 3h27v8.500H4z" fill="#dc4038"/><text x="10" y="9.800" font-size="6.5" fill="#fff">JUIL.</text><text x="12.500" y="28.500" font-size="18" fill="#333">3</text></g></svg></div>
            <div class="app"><svg viewBox="0 0 36 36"><path d="M4 4l24-2 4 30-23 3z" fill="#a3b0b2" stroke="#c5cdce"/><text x="11" y="28" font-size="27" class="serif" fill="#39454a">F</text></svg></div>
            <i class="sep"></i>
            <div class="app"><svg viewBox="0 0 36 36"><circle cx="18" cy="18.500" r="16" fill="#2e93d6"/><path d="M8 7c4-4 10-4 12-2l-2 4-3 2 1 4-4 1-2 4-4-3c-1-4 0-7 2-10zM18 20l6-1 6 5-3 5-5 5-2-5-3-4zM26 7l4 5-3 1-3-3z" fill="#d5eaf4"/></svg></div>
            <div class="app"><svg viewBox="0 0 36 36"><rect x="6" y="1" width="23" height="16" rx="4" fill="#4b0a24"/><path d="M14 4v5M18 9V5.500a2.500 2.500 0 0 1 5 0V9" stroke="#c42c68" stroke-width="1.6" fill="none"/><path d="M1.500 7.500h10l2 3h21v22h-33z" fill="#62bde6"/><path d="M1.500 13h33v20h-33z" fill="#7bcdf0"/></svg></div>
            <div class="app"><svg viewBox="0 0 36 36"><path d="M4.500 4h28l-4 29.500c-4 2-16 2-20 0z" fill="#d0d4d6"/><path d="M9 8l2 24h5V8zM19 8v25h5l3-25z" fill="#dcdfe0"/><ellipse cx="18.500" cy="4.500" rx="14" ry="3.500" fill="#e9eaea"/><path d="M8 5l4-3 4 2 5-3 4 3 4 1-4 2H12z" fill="#7c8285"/><path d="M12 4l3 2M20 2l2 4" stroke="#24382e" stroke-width="1.3"/></svg></div>
        </div>

        <svg class="cursor" width="9" height="14" viewBox="0 0 9 14"><path d="M1 1v10.500l2.300-2.200 1.600 3.900 1.900-.8-1.600-3.800h3z" fill="#111" stroke="#f2f2f2" stroke-width=".9"/></svg>
    </div>
    <script src="script.js"></script>
</body>
</html>
```

FILE: styles.css
```css
body {
    margin: 0;
    background: #000;
    font-family: "Open Sans", "Noto Sans", sans-serif;
    font-size: 9px;
    color: #e4e4e4;
}
* {
    box-sizing: border-box;
}
svg {
    display: block;
    flex: none;
}
.defs {
    position: absolute;
}
[data-w] {
    white-space: nowrap;
    display: block;
    flex: none;
}
.screen {
    position: relative;
    width: 1152px;
    height: 720px;
    margin: 0 auto;
    overflow: hidden;
    background: linear-gradient(90deg, #10202f 0%, #15293f 15%, #1b2a3c 85%, #253448 100%);
}
.back-window {
    position: absolute;
    left: 10px;
    top: 600px;
    width: 60px;
    height: 53px;
    background: #ececec;
    border-radius: 0 0 0 4px;
}
.back-window i {
    position: absolute;
    left: 18px;
    top: 27px;
    width: 10px;
    height: 11px;
    background: #1d0e02;
    border: 1px solid #6b3e12;
}

/* menu bar */
.menubar {
    position: relative;
    display: flex;
    align-items: center;
    height: 18px;
    gap: 15px;
    padding-left: 17px;
    background: linear-gradient(90deg, #d4dee8, #ccd3da 50%, #d3dadf);
    border-bottom: 1px solid #8d9297;
    color: #16181a;
    font-family: Inter, sans-serif;
    font-size: 11.3px;
}
.tray {
    display: flex;
    align-items: center;
    margin-left: auto;
    padding-right: 18px;
    gap: 8.700px;
    font-size: 10.3px;
}
.tray .battery {
    margin-left: -5px;
}
.tray .clock {
    margin-left: 6px;
    font-size: 10.8px;
}
.tray .spot {
    margin-left: 9px;
    margin-right: 4px;
}
.tray .bt {
    margin: 0 2px 0 1px;
}

/* application bar */
.appbar {
    display: flex;
    align-items: center;
    height: 28px;
    background: #505050;
    border-bottom: 1px solid #3e3e3e;
    padding-left: 21px;
}
.app-title {
    margin-left: 328px;
    font-size: 10.2px;
    font-weight: 600;
    color: #ddd;
}
.publish {
    display: flex;
    align-items: center;
    gap: 4px;
    width: 98px;
    height: 21px;
    margin-left: 326px;
    padding-left: 8px;
    border: 1px solid #d8d8d8;
    border-radius: 11px;
    font-size: 9.7px;
    color: #f4f4f4;
}
.workspace-name {
    display: flex;
    align-items: center;
    gap: 6px;
    height: 20px;
    width: 133px;
    margin-left: 4px;
    padding-left: 10px;
    border-left: 1px solid #474747;
    border-right: 1px solid #474747;
    font-size: 9.8px;
}
.stock {
    display: flex;
    align-items: center;
    gap: 1px;
    width: 104px;
    height: 16px;
    margin-left: 4px;
    padding-left: 2px;
    background: #464646;
    border: 1px solid #707070;
    font-size: 8.8px;
    color: #858585;
}
.stock svg {
    color: #c8c8c8;
}
.stock span {
    margin-left: 2px;
}

/* control panel */
.control {
    display: flex;
    height: 48px;
    padding: 5px 0 0 16px;
    background: #525252;
    border-bottom: 1px solid #404040;
    border-left: 1px solid #444;
}
.pair {
    display: flex;
    flex-direction: column;
    gap: 5px;
}
.pair > div {
    display: flex;
    align-items: center;
    height: 16px;
}
.modes {
    width: 17px;
}
.mode {
    height: 17px;
    line-height: 17px;
    text-align: center;
    font-size: 12px;
    color: #ddd;
}
.mode.on {
    background: #333;
    border-radius: 2px;
}
.mode.pil {
    margin-top: 3px;
    font-size: 11px;
}
.fonts {
    width: 128px;
    margin-left: 10px;
}
.field {
    width: 100%;
    background: #464646;
    border: 1px solid #6c6c6c;
    font-size: 8.7px;
    font-weight: 600;
    color: #eee;
}
.field .val {
    margin-left: 2px;
}
.field .lens {
    color: #ccc;
    margin-left: 1px;
}
.field .tiny + .val {
    margin-left: 3px;
}
.drop {
    display: flex;
    align-items: center;
    justify-content: center;
    width: 14px;
    height: 14px;
    margin-left: auto;
    border-left: 1px solid #6c6c6c;
}
.step {
    width: 13px;
    height: 14px;
    border-right: 1px solid #6c6c6c;
    overflow: hidden;
}
.step svg {
    margin-top: -1px;
}
.num {
    width: 69px;
}
.glyphs {
    font-family: "Liberation Serif", serif;
    color: #ccc;
    fill: #ccc;
}
.glyphs svg {
    overflow: visible;
}
.glyphs .inv {
    fill: #444;
}
.g1 {
    margin: 0 3px 0 4px;
    width: 15px;
}
.g1 small {
    font-size: 10px;
    font-weight: 700;
    padding-top: 3px;
}
.g1 big {
    font-size: 16px;
    font-weight: 700;
    margin-left: -1px;
}
.g2 {
    width: 65px;
    margin-left: 8px;
    font-size: 13px;
}
.g2 > div {
    justify-content: center;
}
.g2 span {
    flex: 1;
    text-align: center;
    white-space: nowrap;
    line-height: 14px;
}
.g2 sup, .g2 sub {
    font-size: 7px;
    line-height: 0;
}
.g2 small {
    font-size: 9px;
}
.g3 {
    width: 15px;
    margin-left: 7px;
    margin-right: 2px;
}
.g4 {
    width: 15px;
    margin-left: 9px;
    margin-right: 2px;
}
.g5 {
    width: 14px;
    margin: 0 3px 0 5px;
}
.g5 em {
    font-size: 16px;
    margin-left: 2px;
    font-weight: 700;
}
.swatches {
    margin-left: 8px;
}
.swatches > div {
    gap: 3px;
}
.sw {
    width: 16px;
    height: 16px;
    background: #fff;
    font: 700 17px/16px "Liberation Serif", serif;
    text-align: center;
    color: #b7193a;
}
.swatches .more {
    display: flex;
    align-items: center;
    justify-content: center;
    width: 13px;
    height: 16px;
    border: 1px solid #6c6c6c;
    background: #484848;
}
.char-style {
    width: 38px;
    padding-left: 15px;
    font-size: 14px;
    line-height: 16px;
    color: #c8c8c8;
}
.lang {
    width: 127px;
}
.lang .light {
    background: #e2e2e2;
    color: #333;
}
.lang .light .val {
    margin-left: 5px;
}
.lang .drop {
    border: 0;
}
.lang .light .drop {
    background: #464646;
    color: #eee;
}
.control-end {
    display: flex;
    margin-left: auto;
}
.bolt {
    margin: 11px 7px 0 0;
    color: #ccc;
}
.opts {
    display: flex;
    flex-direction: column;
    align-items: center;
    gap: 14px;
    width: 25px;
    padding-top: 3px;
    color: #ccc;
    border-left: 1px solid #484848;
}

/* workspace */
.workspace {
    position: relative;
    display: flex;
    align-items: flex-start;
}
.panel-head {
    display: flex;
    align-items: center;
    height: 9px;
    padding: 0 5px;
    background: #424242;
    color: #bbb;
}
.grip {
    width: 16px;
    height: 4px;
    background: repeating-linear-gradient(90deg, #3c3c3c 0 1px, #4b4b4b 1px 2px);
}
.toolbar {
    display: flex;
    flex-direction: column;
    width: 32px;
    height: 524px;
    background: #525252;
    border-left: 1px solid #3d3d3d;
    border-bottom: 1px solid #333;
}
.toolbar .grip {
    margin: 3px 0 0 7px;
}
.tools {
    margin: 4px 0 0 4px;
    width: 22px;
}
.tool {
    position: relative;
    display: flex;
    align-items: center;
    justify-content: center;
    height: 19.6px;
    fill: #ccc;
}
.tool svg {
    width: 15px;
    height: 15px;
}
.tool.on {
    background: #303030;
    background-clip: content-box;
    padding: 1px 0;
    border-radius: 2px;
}
.tool.more::after, .chip::after {
    content: "";
    position: absolute;
    right: 1px;
    bottom: 2px;
    border: 1.5px solid;
    border-color: transparent #ddd #ddd transparent;
}
.swap-row {
    display: flex;
    justify-content: space-between;
    width: 22px;
    margin: 4px 0 0 4px;
}
.fill-stroke {
    margin: 4px 0 0 4px;
}
.format-row {
    display: flex;
    align-items: center;
    justify-content: space-between;
    width: 22px;
    height: 12px;
    margin: 4px 0 0 5px;
}
.format-row i {
    width: 7px;
    height: 7px;
    border: 1px solid #888;
}
.format-row b {
    width: 11px;
    background: #333;
    font: 700 10px/11px "Liberation Serif", serif;
    text-align: center;
}
.chip {
    position: relative;
    display: flex;
    align-items: center;
    justify-content: center;
    width: 22px;
    height: 17px;
    margin: 6px 0 0 4px;
}
.chip.red, .chip.dark {
    background: #313131;
    border-radius: 1px;
}
.chip.red i {
    width: 12px;
    height: 11px;
    background: #e0182d;
    border: 1px solid #b98;
}

/* document window */
.doc-window {
    width: 885px;
    height: 599px;
    overflow: hidden;
    background: #505050;
}
.titlebar {
    display: flex;
    align-items: center;
    height: 17px;
    padding-left: 6px;
    gap: 6px;
    background: linear-gradient(#ebebeb, #d0d0d0);
    color: #333;
    font-family: Inter, sans-serif;
    font-size: 10.8px;
}
.titlebar span {
    margin-left: 305px;
    padding-top: 1px;
}
.l {
    width: 10px;
    height: 10px;
    border-radius: 5px;
}
.l.r {
    background: radial-gradient(circle, #6a0b08 0 1.5px, #ee534e 2px);
}
.l.y {
    background: #f6b93b;
}
.l.g {
    background: #2fc845;
}
.tabs {
    display: flex;
    height: 23px;
    background: #424242;
    color: #a9a9a9;
    font-size: 9px;
}
.tab {
    display: flex;
    align-items: center;
    gap: 7px;
    width: 180px;
    padding-left: 12px;
}
.tab.on {
    width: 174px;
    padding-left: 11px;
    background: #525252;
    color: #f2f2f2;
}
.doc-body {
    display: flex;
    height: 546px;
}
.ruler-row, .canvas-row {
    display: flex;
}
.ruler-row {
    background: #1b1b1b;
}
.corner {
    width: 13px;
    height: 14px;
    border-right: 1px dotted #888;
    border-bottom: 1px dotted #888;
}
.hruler text, .vruler text {
    font-size: 9px;
    fill: #e4e4e4;
}
.vruler {
    background: #1b1b1b;
}
.page {
    background: #5d5d5d;
}
.page .h {
    font-family: Inter, sans-serif;
    font-weight: 700;
    font-style: italic;
    font-size: 17.5px;
    fill: #050505;
}
.page .title {
    font-size: 30px;
}
.page .h.red {
    fill: #c5163c;
}
.page .body {
    font-family: Inter, sans-serif;
    font-size: 10.7px;
    font-weight: 300;
    fill: #2a2a2a;
}
.page .p {
    font-size: 7px;
    font-weight: 700;
    fill: #5f8fe0;
}
.page .p.big {
    font-size: 12px;
    fill: #7fb0ec;
}
.page .title-end {
    font-size: 12px;
    fill: #999;
}
.scroll {
    width: 11px;
    background: #454545;
    border-left: 1px solid #3a3a3a;
}
.scroll svg {
    margin: 4px 0 0 1px;
}
.scroll i {
    display: block;
    height: 285px;
    margin-top: 147px;
    background: #686868;
    border-radius: 3px;
}
.status {
    display: flex;
    align-items: center;
    height: 13px;
    padding-left: 12px;
    gap: 10px;
    background: #505050;
    border-top: 1px solid #484848;
    font-size: 8.6px;
}
.status .page-no {
    width: 300px;
    height: 12px;
    padding-left: 5px;
    line-height: 10px;
    background: #454545;
    border: 1px solid #333;
    font-weight: 600;
}
.status b + svg {
    margin: 0 -2px 0 4px;
}

/* collapsed icon dock */
.icon-dock {
    width: 33px;
    height: 574px;
    display: flex;
    flex-direction: column;
    background: #3f3f3f;
    border-right: 1px solid #363636;
    border-left: 1px solid #3a3a3a;
}
.icon-dock .panel-head {
    justify-content: flex-end;
    height: 9px;
}
.icon-group {
    display: flex;
    flex-direction: column;
    align-items: center;
    gap: 5px;
    height: 55px;
    padding-top: 3px;
    background: #525252;
    border-bottom: 1px solid #3c3c3c;
    border-right: 2px solid #484848;
}
.icon-group .link {
    margin-top: 5px;
}
.icon-group.last {
    height: 33px;
    gap: 7px;
}
.peek {
    height: 462px;
    background: linear-gradient(90deg, #e3e7e9, #d5dadd 60%, #b9bfc3);
}

/* pages panel */
.pages {
    display: flex;
    flex-direction: column;
    width: 202px;
    height: 574px;
    background: #525252;
}
.pages .panel-head {
    justify-content: flex-end;
    padding-right: 6px;
}
.ptabs {
    display: flex;
    align-items: center;
    height: 22px;
    background: #424242;
    color: #bbb;
    font-size: 9.5px;
}
.ptab {
    display: flex;
    align-items: center;
    height: 100%;
    gap: 3px;
    overflow: hidden;
}
.ptab.on {
    background: #525252;
    color: #f2f2f2;
}
.ptab svg {
    color: #bbb;
}
.pages .ptab.on {
    width: 49px;
    padding-left: 6px;
}
.burger {
    margin-left: auto;
    margin-right: 6px;
    color: #bbb;
}
.masters {
    height: 51px;
    padding-left: 2px;
    border-bottom: 1px solid #636363;
}
.masters > div {
    display: flex;
    align-items: flex-start;
    justify-content: space-between;
    height: 23px;
    padding: 3px 18px 0 0;
    line-height: 15px;
}
.sheet {
    width: 14px;
    height: 19px;
    background: #fff;
}
.sheet.two {
    width: 28px;
    background: linear-gradient(90deg, #fff 0 14px, #777 14px 15px, #fff 15px);
}
.thumbs {
    flex: 1;
    padding: 1px 0 0 90px;
}
.thumbs text {
    font-size: 9px;
    font-weight: 700;
    fill: #000;
}
.thumbs .n {
    fill: #fff;
    font-size: 8.5px;
}
.pages-foot {
    display: flex;
    align-items: center;
    height: 22px;
    padding: 0 20px 0 4px;
    font-size: 8.7px;
    color: #f0f0f0;
}
.pages-foot .f1 {
    margin-left: auto;
    margin-right: 10px;
}
.pages-foot .f2 {
    color: #ccc;
    margin-right: 12px;
}
.pages-foot .dim {
    color: #888;
}
.bottom-grip {
    display: flex;
    justify-content: center;
    height: 7px;
    border-top: 1px solid #3a3a3a;
}
.bottom-grip .grip {
    height: 3px;
    margin-top: 1px;
}

/* floating panels */
.float {
    position: absolute;
    background: #515151;
    border: 1px solid #3c3c3c;
    box-shadow: 0 1px 3px rgba(0, 0, 0, .3);
}
.float-head {
    display: flex;
    align-items: center;
    justify-content: space-between;
    height: 11px;
    padding: 0 5px 0 4px;
    background: #424242;
    color: #ccc;
}
.mini {
    left: 50px;
    top: 345px;
    width: 132px;
    height: 66px;
    border-radius: 3px 3px 0 0;
}
.mini .grip {
    margin: 2px auto 0;
}
.mini-row {
    display: flex;
    align-items: center;
    gap: 5px;
    height: 18px;
    margin: 3px 4px 0;
    padding-left: 4px;
    font-size: 9px;
    color: #f0f0f0;
}
.mini .grip + .mini-row {
    margin-top: 2px;
}
.mini-row.on {
    background: #3c3c3c;
    border: 1px solid #383838;
    margin-top: 4px;
    padding-left: 3px;
}
.para {
    left: 183px;
    top: 354px;
    width: 247px;
    height: 282px;
    border-top: 3px solid #3a3a3a;
}
.para .ptabs {
    height: 21px;
}
.ptab.cut {
    width: 75px;
    padding-left: 8px;
}
.para .ptab.on {
    width: 118px;
    padding-left: 5px;
}
.para .lefts {
    margin-right: 5px;
}
.para .bar {
    width: 1px;
    height: 9px;
    background: #999;
}
.para .bar + .burger {
    margin-left: 6px;
    margin-right: 5px;
}
.cur-style {
    display: flex;
    align-items: center;
    height: 21px;
    padding: 0 7px 0 3px;
    border-bottom: 1px solid #5c5c5c;
    color: #e8e8e8;
}
.para .cur-style {
    height: 20.5px;
    font-weight: 600;
}
.cur-style em {
    margin-left: auto;
    margin-right: 14px;
    font-style: normal;
    font-weight: 400;
    font-size: 9.5px;
}
.styles {
    height: 210.5px;
    border-bottom: 1px solid #5e5e5e;
    font-weight: 600;
    font-size: 8.8px;
}
.styles > div {
    display: flex;
    align-items: center;
    height: 17.6px;
    padding: 0 0 1px 27px;
    border-bottom: 1px solid #575757;
    color: #ececec;
}
.styles .sel {
    background: #4a687e;
    color: #fff;
    font-weight: 700;
}
.para-foot {
    display: flex;
    align-items: center;
    height: 20px;
    padding: 0 20px 0 5px;
    gap: 11.5px;
    color: #bbb;
}
.para-foot .first {
    margin-right: auto;
}
.cell {
    left: 917px;
    top: 442px;
    width: 193px;
    height: 167px;
    border-radius: 3px 3px 0 0;
}
.cell .ptabs {
    height: 21px;
}
.cell .ptab.cut {
    width: 33px;
    padding-left: 9px;
}
.cell .ptab.on {
    width: 95px;
    padding-left: 5px;
}
.cell .third {
    width: 32px;
    margin-left: 1px;
    padding-left: 8px;
    border-right: 1px solid #3a3a3a;
}
.cell .burger {
    margin-right: 5px;
}
.cell .cur-style, .cell-row {
    color: #b8b8b8;
}
.cell .cur-style svg {
    margin-left: auto;
    color: #e4e4e4;
}
.cell-row {
    display: flex;
    align-items: center;
    justify-content: space-between;
    height: 17px;
    padding: 0 22px 1px 30px;
    border-bottom: 1px solid #5a5a5a;
}
.cell-foot {
    display: flex;
    align-items: center;
    justify-content: flex-end;
    gap: 8px;
    height: 21px;
    margin-top: 69px;
    padding-right: 19px;
    border-top: 1px solid #5e5e5e;
    color: #999;
}
.cell-foot .wide {
    margin-left: 4px;
}
.cell .float-head {
    padding-left: 3px;
}

/* screen sharing bar */
.share {
    position: absolute;
    left: 273px;
    top: 627px;
    width: 607px;
    height: 34px;
    display: flex;
    align-items: center;
    background: #fcfcfc;
    border: 1px solid #9a9a9a;
    box-shadow: 0 2px 5px rgba(0, 0, 0, .45);
    color: #222;
    font: 10.7px Roboto, sans-serif;
}
.share .handle {
    width: 4px;
    height: 9px;
    margin: 0 9px 0 8px;
    border-left: 1px solid #bbb;
    border-right: 1px solid #bbb;
}
.share button {
    display: flex;
    align-items: center;
    justify-content: center;
    width: 109px;
    height: 26px;
    margin-left: 8px;
    padding: 0;
    background: #2974e2;
    border: 0;
    border-radius: 2px;
    color: #fff;
    font: 10px Inter, sans-serif;
}
.share a {
    margin-left: 8px;
    color: #3c76c4;
    font-size: 10.7px;
}

/* dock */
.dock {
    position: absolute;
    left: 182px;
    top: 668px;
    width: 788px;
    height: 56px;
    display: flex;
    padding: 5px 0 0 2.3px;
    background: linear-gradient(#7f848b, #767a83 40%, #686b78);
    border-radius: 4px 4px 0 0;
    border-top: 1px solid #8b9097;
}
.app {
    position: relative;
    width: 42.4px;
    display: flex;
    justify-content: center;
}
.app svg {
    width: 36px;
    height: 36px;
}
.app.run::after {
    content: "";
    position: absolute;
    top: 41px;
    width: 4px;
    height: 4px;
    border-radius: 2px;
    background: #0c0c0c;
}
.app em {
    position: absolute;
    right: 0;
    top: -2px;
    width: 15px;
    height: 15px;
    border-radius: 8px;
    background: #ec4038;
    color: #fff;
    font: 9px/15px Inter, sans-serif;
    text-align: center;
}
.app .serif {
    font-family: "Liberation Serif", serif;
}
.cc {
    width: 36px;
    height: 36px;
    border: 2px solid;
    font-size: 22px;
    font-weight: 600;
    line-height: 31px;
    text-align: center;
    letter-spacing: -.5px;
}
.cc.id {
    background: #3d0820;
    border-color: #c82a68;
    color: #f0508e;
}
.cc.ai {
    background: #2c1604;
    border-color: #cf7a22;
    color: #f09028;
}
.cc.ps {
    background: #06222a;
    border-color: #2cb4c4;
    color: #dcf4f8;
    border-radius: 5px;
}
.sep {
    width: 1px;
    height: 38px;
    margin: 0 9px 0 9px;
    background: #555a62;
}
.cursor {
    position: absolute;
    left: 395px;
    top: 479px;
}
```

FILE: script.js
```js
const NS = 'http://www.w3.org/2000/svg';

function add(parent, tag, attrs, text) {
    const el = document.createElementNS(NS, tag);
    for (const k in attrs) el.setAttribute(k, attrs[k]);
    if (text !== undefined) el.textContent = text;
    parent.appendChild(el);
}

// tracking: spread each label over its set width
function fitLabels() {
    document.querySelectorAll('[data-w]').forEach(el => {
        const range = document.createRange();
        range.selectNodeContents(el);
        const natural = range.getBoundingClientRect().width;
        const target = parseFloat(el.dataset.w);
        el.style.letterSpacing = (target - natural) / el.textContent.length + 'px';
    });
}

// rulers, 10 mm = 26.15 px at 75 %
const STEP = 26.15;

function drawRulers() {
    const h = document.getElementById('hruler');
    for (let n = -15; n <= 17; n++) {
        const x = 509.3 + n * STEP;
        add(h, 'path', { d: `M${x} 134v14`, stroke: '#666' });
        for (let i = 1; i < 10; i++) {
            add(h, 'path', { d: `M${x + i * STEP / 10} ${i === 5 ? 143 : 145}V148`, stroke: '#555', 'stroke-width': 0.7 });
        }
        add(h, 'text', { x: x + 2, y: 143.7 }, Math.abs(n * 10));
    }
    const v = document.getElementById('vruler');
    for (let n = 6; n <= 26; n++) {
        const y = 166.7 + (n - 7) * STEP;
        add(v, 'path', { d: `M96 ${y}h13`, stroke: '#666' });
        for (let i = 1; i < 10; i++) {
            add(v, 'path', { d: `M${i === 5 ? 105 : 107} ${y + i * STEP / 10}H109`, stroke: '#555', 'stroke-width': 0.7 });
        }
        String(n * 10).split('').forEach((c, i) => {
            add(v, 'text', { x: 98.2, y: y + 8 + i * 7.2 }, c);
        });
    }
}

// hidden characters: a dot in every word space
function drawSpaces() {
    const page = document.getElementById('page');
    page.querySelectorAll('.body text, .h').forEach(t => {
        const s = t.textContent;
        const big = t.classList.contains('h');
        for (let i = 0; i < s.length; i++) {
            if (s[i] !== ' ') continue;
            const a = t.getStartPositionOfChar(i);
            const b = t.getEndPositionOfChar(i);
            add(page, 'circle', { cx: (a.x + b.x) / 2, cy: a.y - (big ? 4.5 : 3), r: big ? 0.9 : 0.6, fill: '#6f9fd0' });
        }
    });
}

fitLabels();
drawRulers();
drawSpaces();
```
